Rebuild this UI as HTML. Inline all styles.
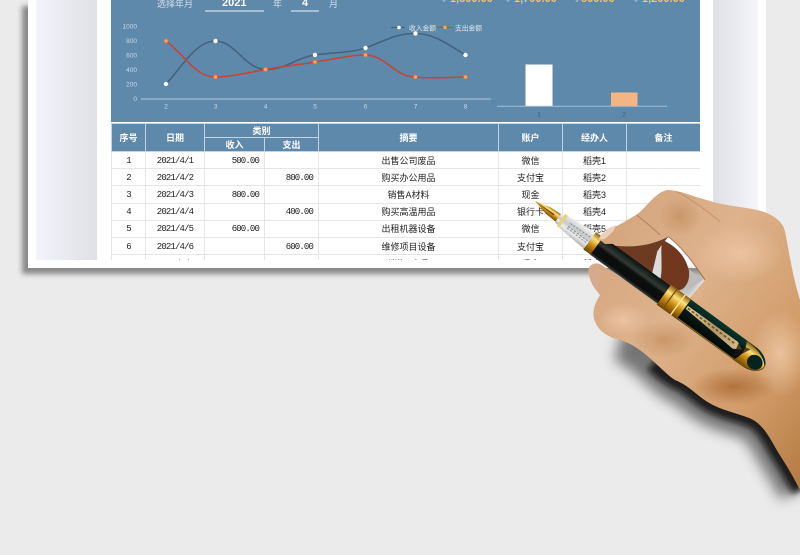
<!DOCTYPE html>
<html><head><meta charset="utf-8"><style>
html,body{margin:0;padding:0;width:800px;height:555px;overflow:hidden;background:#ebebeb}
body{position:relative;font-family:"Liberation Sans","Noto Sans CJK SC",sans-serif}
.a{position:absolute}
#sheet{left:28px;top:0;width:738px;height:268px;background:#fff;box-shadow:-6px 6px 5px rgba(0,0,0,.42)}
.lav1{left:36px;top:0;width:61px;height:260px;background:linear-gradient(90deg,#f3f4fb,#dfe0e5)}
.lav2{left:713px;top:0;width:45px;height:260px;background:linear-gradient(90deg,#dfe0e6,#f5f6fc)}
#panel{left:111px;top:0;width:589px;height:122px;background:#5f89ab}
.t{position:absolute;white-space:nowrap;line-height:1}
.v{color:#f3c766;font-weight:bold;font-size:11px;top:-6px}
.y{color:#bcd0e0;font-size:11px;top:-6px}
#wrap{left:111px;top:123px;width:589px;height:137px;overflow:hidden;filter:blur(.3px)}
table{border-collapse:collapse;table-layout:fixed;width:589px;font-size:9px;color:#222}
td,th{padding:0;text-align:center;overflow:hidden;white-space:nowrap;border:1px solid #e6e6e6}
th{background:#5f89ab;color:#fff;font-weight:bold;border-color:#c3d3e0;height:13px}
td{height:16.2px;background:#fff}
.n{font-family:"Liberation Mono",monospace;font-size:9px;letter-spacing:-.85px;padding-top:1px;height:15.2px}
.r{text-align:right;padding-right:5px}
</style></head><body>
<div class="a" id="sheet"></div>
<div class="a lav1"></div><div class="a lav2"></div>
<div class="a" id="panel"></div>
<div class="t" style="left:157px;top:0;font-size:9px;color:#d5e0e9">选择年月</div>
<div class="t" style="left:222px;top:-2px;font-size:11px;font-weight:bold;color:#fff">2021</div>
<div class="a" style="left:205px;top:10px;width:59px;height:1.5px;background:#a8bfd1"></div>
<div class="t" style="left:273px;top:0;font-size:9px;color:#d5e0e9">年</div>
<div class="t" style="left:302px;top:-2px;font-size:11px;font-weight:bold;color:#fff">4</div>
<div class="a" style="left:291px;top:10px;width:28px;height:1.5px;background:#a8bfd1"></div>
<div class="t" style="left:329px;top:0;font-size:9px;color:#d5e0e9">月</div>
<div class="t y" style="left:441px">¥</div><div class="t v" style="left:450px">1,800.00</div>
<div class="t y" style="left:505px">¥</div><div class="t v" style="left:514px">1,700.00</div>
<div class="t y" style="left:574px">¥</div><div class="t v" style="left:581px">800.00</div>
<div class="t y" style="left:633px">¥</div><div class="t v" style="left:642px">1,200.00</div>

<svg class="a" style="left:0;top:0;filter:blur(.3px)" width="800" height="130" font-family="Liberation Sans,Noto Sans CJK SC,sans-serif">
<g font-size="6.5" fill="#c9d8e4" text-anchor="end">
<text x="137" y="28.5">1000</text><text x="137" y="43">800</text><text x="137" y="57.5">600</text><text x="137" y="72">400</text><text x="137" y="86.5">200</text><text x="137" y="101">0</text></g>
<line x1="141" y1="99" x2="491" y2="99" stroke="#a5bccf" stroke-width="1.3"/>
<g font-size="6.5" fill="#c9d8e4" text-anchor="middle">
<text x="166" y="108.5">2</text><text x="215.5" y="108.5">3</text><text x="265.5" y="108.5">4</text><text x="315" y="108.5">5</text><text x="365.5" y="108.5">6</text><text x="415.5" y="108.5">7</text><text x="465.5" y="108.5">8</text></g>
<path d="M166,84C180,70 195,41 215.5,41C235,41 245,69 265.5,69.5C285,70 295,58 315,55C335,52 350,53 365.5,48C385,41 395,33.5 415.5,33.5C435,33.5 450,46 465.5,55" fill="none" stroke="#44637f" stroke-width="1.6"/>
<path d="M166,41C185,55 195,77 215.5,77C232,77 250,72 265.5,69.5C285,66 297,65 315,62C335,59 350,55 365.5,55C385,55 395,77 415.5,77C435,79 450,77 465.5,77" fill="none" stroke="#c0473a" stroke-width="1.6"/>
<g fill="#fff"><circle cx="166" cy="84" r="2.2"/><circle cx="215.5" cy="41" r="2.2"/><circle cx="265.5" cy="69.5" r="2.2"/><circle cx="315" cy="55" r="2.2"/><circle cx="365.5" cy="48" r="2.2"/><circle cx="415.5" cy="33.5" r="2.2"/><circle cx="465.5" cy="55" r="2.2"/></g>
<g fill="#f7a94f" stroke="#d9684a" stroke-width=".7"><circle cx="166" cy="41" r="2"/><circle cx="215.5" cy="77" r="2"/><circle cx="265.5" cy="69.5" r="2"/><circle cx="315" cy="62" r="2"/><circle cx="365.5" cy="55" r="2"/><circle cx="415.5" cy="77" r="2"/><circle cx="465.5" cy="77" r="2"/></g>
<line x1="391" y1="27.5" x2="405" y2="27.5" stroke="#44637f" stroke-width="1.2"/><circle cx="399" cy="27.5" r="1.8" fill="#fff"/>
<text x="409" y="30.3" font-size="6.75" fill="#dfe8ef">收入金额</text>
<line x1="437" y1="27.5" x2="453" y2="27.5" stroke="#c0473a" stroke-width="1.2"/><circle cx="445" cy="27.5" r="1.7" fill="#f7a94f"/>
<text x="455" y="30.3" font-size="6.75" fill="#dfe8ef">支出金额</text>
<rect x="525.5" y="64.5" width="27" height="41.5" fill="#fff"/>
<rect x="611" y="92.5" width="26.5" height="13.5" fill="#f4b583"/>
<line x1="497" y1="106.3" x2="667" y2="106.3" stroke="#a9bfd1" stroke-width="1"/>
<g font-size="6.5" fill="#3f5a70" text-anchor="middle"><text x="539" y="116.5">1</text><text x="624" y="116.5">2</text></g>
</svg>

<div class="a" id="wrap"><table>
<colgroup><col style="width:34px"><col style="width:59px"><col style="width:60px"><col style="width:54px"><col style="width:180px"><col style="width:64px"><col style="width:64px"><col style="width:74px"></colgroup>
<tr><th rowspan="2">序号</th><th rowspan="2">日期</th><th colspan="2">类别</th><th rowspan="2">摘要</th><th rowspan="2">账户</th><th rowspan="2">经办人</th><th rowspan="2">备注</th></tr>
<tr><th>收入</th><th>支出</th></tr>
<tr><td class="n">1</td><td class="n">2021/4/1</td><td class="n r">500.00</td><td></td><td>出售公司废品</td><td>微信</td><td>稻壳1</td><td></td></tr>
<tr><td class="n">2</td><td class="n">2021/4/2</td><td></td><td class="n r">800.00</td><td>购买办公用品</td><td>支付宝</td><td>稻壳2</td><td></td></tr>
<tr><td class="n">3</td><td class="n">2021/4/3</td><td class="n r">800.00</td><td></td><td>销售A材料</td><td>现金</td><td>稻壳3</td><td></td></tr>
<tr><td class="n">4</td><td class="n">2021/4/4</td><td></td><td class="n r">400.00</td><td>购买高温用品</td><td>银行卡</td><td>稻壳4</td><td></td></tr>
<tr><td class="n">5</td><td class="n">2021/4/5</td><td class="n r">600.00</td><td></td><td>出租机器设备</td><td>微信</td><td>稻壳5</td><td></td></tr>
<tr><td class="n">6</td><td class="n">2021/4/6</td><td></td><td class="n r">600.00</td><td>维修项目设备</td><td>支付宝</td><td>稻壳6</td><td></td></tr>
<tr><td class="n">7</td><td class="n">2021/4/7</td><td class="n r">900.00</td><td></td><td>销售B产品</td><td>现金</td><td>稻壳7</td><td></td></tr>
</table></div>

<svg class="a" style="left:0;top:0" width="800" height="555" viewBox="0 0 800 555">
<defs>
<filter id="b2" filterUnits="userSpaceOnUse" x="0" y="0" width="1000" height="1300"><feGaussianBlur stdDeviation="9"/></filter>
<filter id="b3" filterUnits="userSpaceOnUse" x="0" y="0" width="1000" height="1300"><feGaussianBlur stdDeviation="20"/></filter>
<linearGradient id="skin" x1="0" y1="0" x2="1" y2="1"><stop offset="0" stop-color="#d2a27a"/><stop offset=".4" stop-color="#deb28c"/><stop offset=".75" stop-color="#d09a67"/><stop offset="1" stop-color="#b47a42"/></linearGradient>
<linearGradient id="black" x1="0" y1="0" x2="0" y2="1"><stop offset="0" stop-color="#0b1210"/><stop offset=".35" stop-color="#333a36"/><stop offset=".5" stop-color="#0c0f0d"/><stop offset=".85" stop-color="#0a0d0c"/><stop offset="1" stop-color="#39403c"/></linearGradient>
<linearGradient id="cap" x1="0" y1="0" x2="0" y2="1"><stop offset="0" stop-color="#06352c"/><stop offset=".5" stop-color="#081a16"/><stop offset="1" stop-color="#020605"/></linearGradient>
<linearGradient id="gold" x1="0" y1="0" x2="0" y2="1"><stop offset="0" stop-color="#8a5a08"/><stop offset=".3" stop-color="#ffe27a"/><stop offset=".6" stop-color="#c88c12"/><stop offset="1" stop-color="#6b4304"/></linearGradient>
<linearGradient id="silver" x1="0" y1="0" x2="0" y2="1"><stop offset="0" stop-color="#f7f7f7"/><stop offset=".45" stop-color="#c5c8c9"/><stop offset=".7" stop-color="#eeefef"/><stop offset="1" stop-color="#a9abac"/></linearGradient>
<linearGradient id="clip" x1="0" y1="0" x2="1" y2="0"><stop offset="0" stop-color="#e8cf9b"/><stop offset=".5" stop-color="#b49563"/><stop offset="1" stop-color="#d9c08c"/></linearGradient>
<radialGradient id="hi" cx=".5" cy=".5" r=".5"><stop offset="0" stop-color="#ecc6a2" stop-opacity=".9"/><stop offset="1" stop-color="#ecc6a2" stop-opacity="0"/></radialGradient>
<radialGradient id="lo" cx=".5" cy=".5" r=".5"><stop offset="0" stop-color="#a5642d" stop-opacity=".75"/><stop offset="1" stop-color="#a5642d" stop-opacity="0"/></radialGradient>
<clipPath id="hc"><path d="M240,175C270,145 320,125 355,100C385,75 405,40 440,30C480,30 520,50 560,60C620,80 680,80 730,95C770,110 790,130 795,155C805,200 815,280 840,360L840,930C815,880 795,850 770,810C745,765 725,730 690,715C640,695 590,690 540,650C510,625 490,610 465,600C420,570 370,500 300,480C255,470 225,445 220,405C220,375 235,355 240,345C225,325 205,300 205,270C210,250 230,245 245,255L330,320L250,190Z"/></clipPath>
</defs>
<g transform="translate(520,180) scale(.33333)">
<!-- shadows -->
<path d="M300,480C370,500 420,570 465,600C490,610 510,625 540,650C590,690 640,695 690,715C725,730 745,765 770,810C795,850 815,880 840,930" fill="none" stroke="#000" stroke-width="130" stroke-opacity=".5" filter="url(#b3)"/>
<path d="M400,550C420,570 440,585 465,600C490,610 510,625 540,650C590,690 640,695 690,715C725,730 745,765 770,810C795,850 815,880 840,930" fill="none" stroke="#0c0c0c" stroke-width="50" stroke-opacity=".85" filter="url(#b2)"/>
<!-- inner dark fingers and gap -->
<path d="M300,200L560,280L510,350L400,330Z" fill="#9b9b9b" opacity=".55" filter="url(#b2)"/>
<path d="M250,190L445,170L425,195L412,215L395,290L300,240Z" fill="#6d3a22"/>
<path d="M425,178C470,200 500,230 508,280C508,310 490,335 470,330L420,300C430,265 420,225 425,178Z" fill="#71381f"/>
<path d="M395,285L412,215L425,195C420,225 430,265 420,300Z" fill="#dcdcdc"/>
<path d="M505,330L553,296L508,270Z" fill="#bcbcbc"/>
<!-- hand -->
<path d="M240,175C270,145 320,125 355,100C385,75 405,40 440,30C480,30 520,50 560,60C620,80 680,80 730,95C770,110 790,130 795,155C805,200 815,280 840,360L840,930C815,880 795,850 770,810C745,765 725,730 690,715C640,695 590,690 540,650C510,625 490,610 465,600C420,570 370,500 300,480C255,470 225,445 220,405C220,375 235,355 240,345C225,325 205,300 205,270C210,250 230,245 245,255L470,400L555,300C530,270 500,210 445,170C400,195 330,210 250,190Z" fill="url(#skin)"/>
<g clip-path="url(#hc)">
<ellipse cx="660" cy="220" rx="130" ry="90" fill="url(#hi)"/>
<ellipse cx="780" cy="520" rx="90" ry="130" fill="url(#hi)"/>
<ellipse cx="310" cy="420" rx="75" ry="50" fill="url(#hi)"/>
<ellipse cx="640" cy="620" rx="130" ry="55" fill="url(#lo)"/>
<ellipse cx="480" cy="110" rx="65" ry="60" fill="url(#lo)" opacity=".4"/>
<ellipse cx="430" cy="480" rx="95" ry="55" fill="url(#lo)" opacity=".45"/>
</g>
<path d="M445,170C490,205 525,255 555,300" fill="none" stroke="#8a5531" stroke-width="3" opacity=".75"/>
<path d="M470,35C520,60 570,100 600,125" fill="none" stroke="#a86f45" stroke-width="3" opacity=".45"/>
<path d="M350,105C375,125 405,150 420,165" fill="none" stroke="#9a623a" stroke-width="3" opacity=".6"/>
<path d="M206,268C208,252 230,248 240,258C243,285 240,320 232,335C218,320 206,295 206,268Z" fill="#d6ab8d"/>
<!-- pen -->
<g transform="translate(45,63) rotate(36)">
<path d="M0,0L50,-12L90,-14L90,14L50,12Z" fill="url(#gold)"/>
<path d="M0,0L70,-2L70,2Z" fill="#5a3c08"/>
<rect x="86" y="-17" width="18" height="34" fill="url(#silver)"/>
<rect x="96" y="-22" width="10" height="44" fill="#e9cf7a"/>
<path d="M106,-22L205,-30L205,30L106,22Z" fill="url(#silver)"/>
<g stroke="#6f7375" stroke-width="3" stroke-dasharray="7 4" opacity=".75"><line x1="125" y1="-8" x2="200" y2="-10"/><line x1="125" y1="3" x2="200" y2="4"/><line x1="125" y1="9" x2="200" y2="11"/></g>
<rect x="203" y="-32" width="28" height="64" fill="url(#gold)"/>
<rect x="229" y="-33" width="252" height="66" fill="url(#black)"/>
<rect x="478" y="-37" width="76" height="74" fill="url(#gold)"/>
<line x1="500" y1="-37" x2="500" y2="37" stroke="#7c5208" stroke-width="4"/>
<line x1="530" y1="-37" x2="530" y2="37" stroke="#ffe8a0" stroke-width="4"/>
<path d="M552,-36L800,-35C830,-32 850,-15 850,0C850,15 830,32 800,35L552,36Z" fill="url(#cap)"/>
<path d="M556,-15L740,-16L765,-4L740,10L556,-4Z" fill="url(#clip)"/>
<path d="M560,-9L740,-6" stroke="#6d5630" stroke-width="5" stroke-dasharray="9 6"/>
<path d="M552,33L800,33" stroke="#8b6b20" stroke-width="3"/>
<path d="M760,-34C800,-34 830,-25 848,-4C850,12 838,26 800,35L760,36C775,15 775,-15 760,-34Z" fill="url(#gold)"/>
<ellipse cx="818" cy="4" rx="24" ry="22" fill="#06231f"/>
<path d="M745,-12L785,-20L770,10L755,30Z" fill="#1a1408" opacity=".75"/>
</g>
<!-- index finger overlap -->
<path d="M237,178C248,158 262,145 288,136L330,190L255,192Z" fill="#d6a67e"/>
<path d="M236,178C245,155 265,142 288,136C285,150 270,165 252,178Z" fill="#ecd0bb"/>
</g>
</svg>
</body></html>
